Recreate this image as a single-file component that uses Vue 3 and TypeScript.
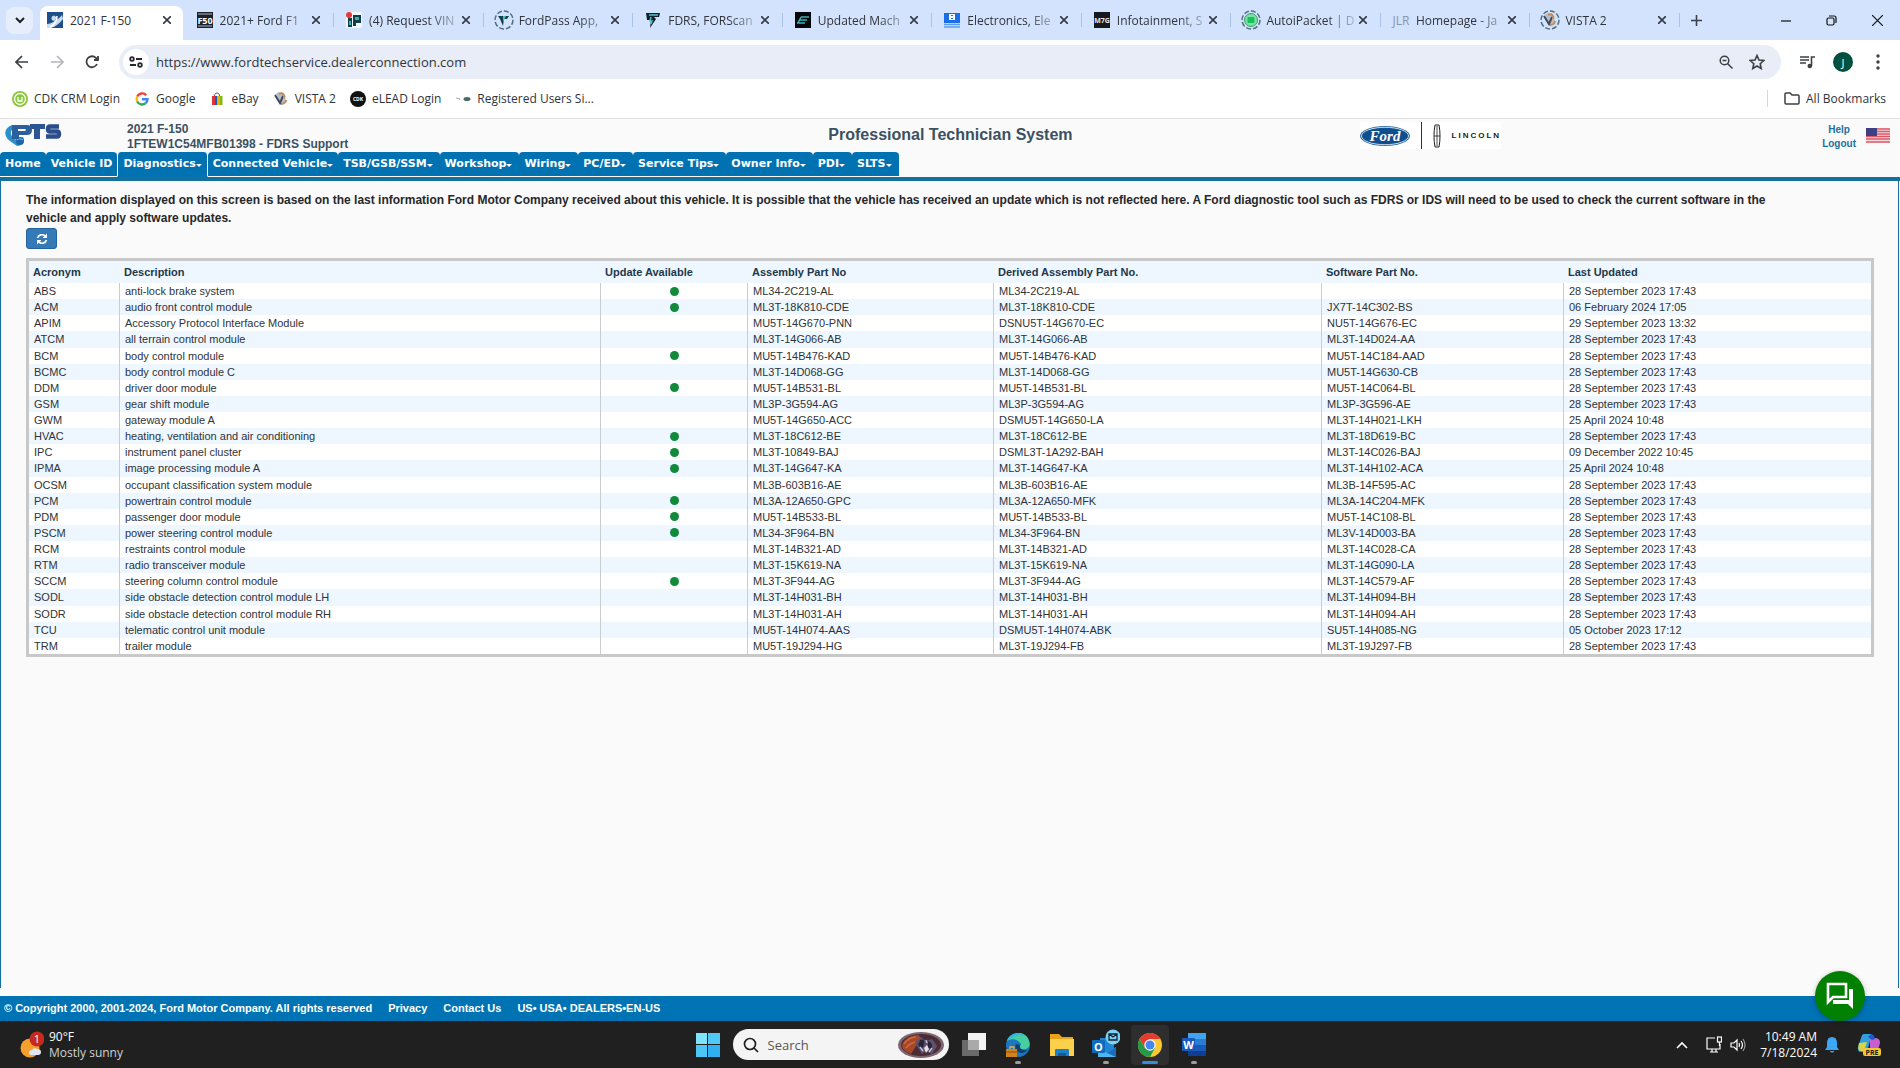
<script setup lang="ts">
interface Tab { title: string; icon: string }
interface Module {
  acronym: string
  description: string
  update: boolean
  assembly: string
  derived: string
  software: string
  updated: string
}

const ring = '<circle cx="10" cy="10" r="9" fill="none" stroke="#4f7180" stroke-width="1.5" stroke-dasharray="5 2"/>'
const vista = '<path d="M5 5c2-3 7-2 9 1l1 6c-1 3-4 4-6 3z" fill="#b9bfc8"/><path d="M4 6l5 8 3-7" fill="none" stroke="#3c4a63" stroke-width="2"/><path d="M8 5c4-2 6 1 5 4M10 15c3 0 5-2 5-4" fill="none" stroke="#c58a55" stroke-width="2"/>'

const tabs: Tab[] = [
  { title: '2021 F-150', icon: '<rect x="2" y="2" width="16" height="16" fill="#1f4f8a"/><path d="M2 14c5 0 10-4 9-7-2-3-6 0-4 3 2 2 7-1 10-5l1 4c-4 5-8 8-12 9H2z" fill="#c9dcee"/><path d="M5 17c4-2 7-6 7-11" fill="none" stroke="#fff" stroke-width="1.5"/>' },
  { title: '2021+ Ford F1', icon: '<rect x="2" y="2" width="16" height="16" fill="#1b2029"/><text x="10" y="13.5" font-size="9" font-weight="700" text-anchor="middle" fill="#fff">F50</text><path d="M3 4h14M3 16h14" stroke="#aeb8c6"/>' },
  { title: '(4) Request VIN', icon: '<rect x="2" y="2" width="16" height="16" rx="2" fill="#f4f8fc"/><path d="M4 8h4v9H4zM9 5h8v8h-5v3H9z" fill="#123c46"/><path d="M11 7h4v3h-4zM5 11h2v4H5z" fill="#35b3b3"/><circle cx="5" cy="5" r="3" fill="#e5383b"/>' },
  { title: 'FordPass App,', icon: ring + '<path d="M4 6h11l-2 3h-3l-1 7-3-7z" fill="#153f49"/><path d="M9 6h3l-3 6z" fill="#42c3c8"/>' },
  { title: 'FDRS, FORScan', icon: '<path d="M3 3h14l-1 4h-5l2 2-6 9 1-8H4z" fill="#10202a"/><path d="M6 5h9M8 7l-1 4h2l-1 3" fill="none" stroke="#4fc3cf" stroke-width="1.5"/>' },
  { title: 'Updated Mach', icon: '<rect x="2" y="2" width="16" height="16" fill="#05080a"/><path d="M8 7h8M6 10h8M4 13h8M8 7l-3 6" stroke="#3bb0b8" stroke-width="1.6"/>' },
  { title: 'Electronics, Ele', icon: '<path d="M2 3h16v10H2z" fill="#1a6fe8"/><path d="M7 4h6v6H7z" fill="#fff"/><path d="M9 5h2v1H9zM9 8h2v1H9z" fill="#1a6fe8"/><path d="M2 14.5h16M2 17h16" stroke="#5e9de8" stroke-width="1.5"/>' },
  { title: 'Infotainment, S', icon: '<rect x="2" y="2" width="16" height="16" fill="#16181f"/><text x="10" y="13" font-size="7" font-weight="700" text-anchor="middle" fill="#e7e9f0">M7G</text>' },
  { title: 'AutoiPacket | D', icon: ring + '<circle cx="10" cy="10" r="6.5" fill="#7ee0a4" stroke="#3c9a68"/><rect x="6.5" y="7" width="7" height="6" rx="1" fill="#12c45a"/>' },
  { title: 'Homepage - Ja', icon: '<text x="10" y="15" font-size="12" text-anchor="middle" fill="#8795aa">JLR</text>' },
  { title: 'VISTA 2', icon: ring + vista },
]

const bookmarks: Tab[] = [
  { title: 'CDK CRM Login', icon: '<circle cx="10" cy="10" r="8" fill="#8cc63f"/><circle cx="10" cy="10" r="5.5" fill="none" stroke="#fff" stroke-width="1.3"/><path d="M8 8v4h4V8" fill="none" stroke="#fff" stroke-width="1.3"/>' },
  { title: 'Google', icon: '<path d="M14.2 6.200a5.500 5.500 0 0 0-9 1.300" fill="none" stroke="#ea4335" stroke-width="2.4"/><path d="M5.200 7.500a5.500 5.500 0 0 0 0 5" fill="none" stroke="#fbbc05" stroke-width="2.4"/><path d="M5.200 12.500a5.500 5.500 0 0 0 8.300 1.800" fill="none" stroke="#34a853" stroke-width="2.4"/><path d="M10 10.200h5.500q0 2.500-2 4.100" fill="none" stroke="#4285f4" stroke-width="2.4"/>' },
  { title: 'eBay', icon: '<path d="M5 7h3v9H5z" fill="#e53238"/><path d="M8 7h2.5v9H8z" fill="#0064d2"/><path d="M10.5 7H13v9h-2.5z" fill="#f5af02"/><path d="M13 7h2.5v9H13z" fill="#86b817"/><path d="M7.5 7c0-4 5-4 5 0" fill="none" stroke="#555"/>' },
  { title: 'VISTA 2', icon: vista },
  { title: 'eLEAD Login', icon: '<circle cx="10" cy="10" r="8" fill="#111"/><text x="10" y="12" font-size="5" font-weight="700" text-anchor="middle" fill="#fff">CDK</text>' },
  { title: 'Registered Users Si...', icon: '<path d="M3 9l4 1-1 1" fill="none" stroke="#aab"/><ellipse cx="14" cy="10" rx="3.5" ry="2" fill="#4a6a62"/>' },
]

const menu = [
  { label: 'Home', drop: false },
  { label: 'Vehicle ID', drop: false },
  { label: 'Diagnostics', drop: true, active: true },
  { label: 'Connected Vehicle', drop: true },
  { label: 'TSB/GSB/SSM', drop: true },
  { label: 'Workshop', drop: true },
  { label: 'Wiring', drop: true },
  { label: 'PC/ED', drop: true },
  { label: 'Service Tips', drop: true },
  { label: 'Owner Info', drop: true },
  { label: 'PDI', drop: true },
  { label: 'SLTS', drop: true },
]

const columns = ['Acronym', 'Description', 'Update Available', 'Assembly Part No', 'Derived Assembly Part No.', 'Software Part No.', 'Last Updated']
const sept = '28 September 2023 17:43'

const m = (acronym: string, description: string, update: boolean, assembly: string, derived: string, software: string, updated = sept): Module =>
  ({ acronym, description, update, assembly, derived, software, updated })

const modules: Module[] = [
  m('ABS', 'anti-lock brake system', true, 'ML34-2C219-AL', 'ML34-2C219-AL', ''),
  m('ACM', 'audio front control module', true, 'ML3T-18K810-CDE', 'ML3T-18K810-CDE', 'JX7T-14C302-BS', '06 February 2024 17:05'),
  m('APIM', 'Accessory Protocol Interface Module', false, 'MU5T-14G670-PNN', 'DSNU5T-14G670-EC', 'NU5T-14G676-EC', '29 September 2023 13:32'),
  m('ATCM', 'all terrain control module', false, 'ML3T-14G066-AB', 'ML3T-14G066-AB', 'ML3T-14D024-AA'),
  m('BCM', 'body control module', true, 'MU5T-14B476-KAD', 'MU5T-14B476-KAD', 'MU5T-14C184-AAD'),
  m('BCMC', 'body control module C', false, 'ML3T-14D068-GG', 'ML3T-14D068-GG', 'MU5T-14G630-CB'),
  m('DDM', 'driver door module', true, 'MU5T-14B531-BL', 'MU5T-14B531-BL', 'MU5T-14C064-BL'),
  m('GSM', 'gear shift module', false, 'ML3P-3G594-AG', 'ML3P-3G594-AG', 'ML3P-3G596-AE'),
  m('GWM', 'gateway module A', false, 'MU5T-14G650-ACC', 'DSMU5T-14G650-LA', 'ML3T-14H021-LKH', '25 April 2024 10:48'),
  m('HVAC', 'heating, ventilation and air conditioning', true, 'ML3T-18C612-BE', 'ML3T-18C612-BE', 'ML3T-18D619-BC'),
  m('IPC', 'instrument panel cluster', true, 'ML3T-10849-BAJ', 'DSML3T-1A292-BAH', 'ML3T-14C026-BAJ', '09 December 2022 10:45'),
  m('IPMA', 'image processing module A', true, 'ML3T-14G647-KA', 'ML3T-14G647-KA', 'ML3T-14H102-ACA', '25 April 2024 10:48'),
  m('OCSM', 'occupant classification system module', false, 'ML3B-603B16-AE', 'ML3B-603B16-AE', 'ML3B-14F595-AC'),
  m('PCM', 'powertrain control module', true, 'ML3A-12A650-GPC', 'ML3A-12A650-MFK', 'ML3A-14C204-MFK'),
  m('PDM', 'passenger door module', true, 'MU5T-14B533-BL', 'MU5T-14B533-BL', 'MU5T-14C108-BL'),
  m('PSCM', 'power steering control module', true, 'ML34-3F964-BN', 'ML34-3F964-BN', 'ML3V-14D003-BA'),
  m('RCM', 'restraints control module', false, 'ML3T-14B321-AD', 'ML3T-14B321-AD', 'ML3T-14C028-CA'),
  m('RTM', 'radio transceiver module', false, 'ML3T-15K619-NA', 'ML3T-15K619-NA', 'ML3T-14G090-LA'),
  m('SCCM', 'steering column control module', true, 'ML3T-3F944-AG', 'ML3T-3F944-AG', 'ML3T-14C579-AF'),
  m('SODL', 'side obstacle detection control module LH', false, 'ML3T-14H031-BH', 'ML3T-14H031-BH', 'ML3T-14H094-BH'),
  m('SODR', 'side obstacle detection control module RH', false, 'ML3T-14H031-AH', 'ML3T-14H031-AH', 'ML3T-14H094-AH'),
  m('TCU', 'telematic control unit module', false, 'MU5T-14H074-AAS', 'DSMU5T-14H074-ABK', 'SU5T-14H085-NG', '05 October 2023 17:12'),
  m('TRM', 'trailer module', false, 'MU5T-19J294-HG', 'ML3T-19J294-FB', 'ML3T-19J297-FB'),
]
</script>

<template>
  <div class="screen">
    <header class="tabstrip">
      <button class="tab-search" aria-label="Search tabs"><svg width="10" height="10" viewBox="0 0 10 10"><path d="M1 3l4 4 4-4" fill="none" stroke="#1f2024" stroke-width="2" /></svg></button>
      <div class="tabs">
        <div v-for="(t, i) in tabs" :key="t.title" class="tab" :class="{ current: i === 0 }">
          <svg class="fav" viewBox="0 0 20 20" v-html="t.icon" />
          <span class="tab-title">{{ t.title }}</span>
          <button class="close" aria-label="Close tab"><svg width="8" height="8" viewBox="0 0 8 8"><path d="M0 0l8 8M8 0L0 8" stroke="#333a44" stroke-width="1.6" /></svg></button>
        </div>
      </div>
      <div class="window-controls">
        <button class="new-tab" aria-label="New tab"><svg width="11" height="11" viewBox="0 0 11 11"><path d="M5.5 0v11M0 5.5h11" stroke="#3a414d" stroke-width="1.6" /></svg></button>
        <button aria-label="Minimize"><svg width="11" height="11" viewBox="0 0 11 11"><path d="M0 6h10" stroke="#111" stroke-width="1.2" /></svg></button>
        <button aria-label="Restore"><svg width="11" height="11" viewBox="0 0 11 11" fill="none" stroke="#111" stroke-width="1.2"><rect x="1" y="3" width="7" height="7" rx="1.5" /><path d="M3 1h5q2 0 2 2v5" /></svg></button>
        <button aria-label="Close"><svg width="11" height="11" viewBox="0 0 11 11"><path d="M0 0l11 11M11 0L0 11" stroke="#111" stroke-width="1.2" /></svg></button>
      </div>
    </header>

    <div class="toolbar">
      <button aria-label="Back"><svg width="14" height="14" viewBox="0 0 14 14" fill="none" stroke="#3c4043" stroke-width="1.7"><path d="M7 1L1 7l6 6M1 7h12" /></svg></button>
      <button aria-label="Forward"><svg width="14" height="14" viewBox="0 0 14 14" fill="none" stroke="#b3b6ba" stroke-width="1.7"><path d="M7 1l6 6-6 6M13 7H1" /></svg></button>
      <button aria-label="Reload"><svg width="14" height="14" viewBox="0 0 14 14" fill="none" stroke="#3c4043" stroke-width="1.8"><path d="M12 9a5.500 5.500 0 1 1-1-6l2 2M13 1v4H9" /></svg></button>
      <div class="omnibox">
        <span class="site"><svg width="14" height="12" viewBox="0 0 14 12" fill="none" stroke="#27292d" stroke-width="1.8"><circle cx="3" cy="3" r="1.8" /><path d="M7 3h6M1 9h6" /><circle cx="11" cy="9" r="1.8" /></svg></span>
        <input aria-label="Address" value="https://www.fordtechservice.dealerconnection.com" />
        <svg width="14" height="14" viewBox="0 0 14 14" fill="none" stroke="#3c4043" stroke-width="1.5"><circle cx="5.5" cy="5.5" r="4.3" /><path d="M3.500 5.500h4M8.500 8.500l5 5" /></svg>
        <svg width="16" height="16" viewBox="0 0 16 16" fill="none" stroke="#3c4043" stroke-width="1.6"><path d="M8 1.500l2 4.500 4.800.5-3.600 3.200 1 4.800L8 12l-4.200 2.500 1-4.800L1.200 6.500 6 6z" /></svg>
      </div>
      <svg class="playlist" width="16" height="14" viewBox="0 0 16 14"><path d="M1 2h9M1 5h9M1 8h6" stroke="#3c4043" stroke-width="1.6" /><path d="M12.500 11V2H16" fill="none" stroke="#3c4043" stroke-width="1.6" /><circle cx="10.8" cy="11" r="2.3" fill="#3c4043" /></svg>
      <span class="avatar">J</span>
      <svg width="4" height="16" viewBox="0 0 4 16" fill="#3c4043"><circle cx="2" cy="2" r="1.7" /><circle cx="2" cy="8" r="1.7" /><circle cx="2" cy="14" r="1.7" /></svg>
    </div>

    <nav class="bookmarks" aria-label="Bookmarks">
      <a v-for="b in bookmarks" :key="b.title" href="#"><svg width="20" height="20" viewBox="0 0 20 20" v-html="b.icon" />{{ b.title }}</a>
      <a href="#" class="all"><svg width="16" height="13" viewBox="0 0 16 13"><path d="M1 2q0-1 1-1h4l2 2h6q1 0 1 1v7q0 1-1 1H2q-1 0-1-1z" fill="none" stroke="#3c4043" stroke-width="1.5" /></svg>All Bookmarks</a>
    </nav>

    <div class="site-head">
      <svg class="pts" width="58" height="24" viewBox="0 0 58 24">
        <path d="M8 2C0 5-1 13 6 18l7 5c6 0 8-5 6-9l-6 3C6 14 5 8 10 5z" fill="#2a8fc9" />
        <circle cx="16" cy="18" r="4" fill="#1c66a8" /><path d="M13 17c2-2 4-1 6 0" stroke="#7cd0ee" fill="none" />
        <path d="M8 2h15q5 0 5 5t-5 5h-8v4H8zm6 4v2h7q2-1 0-2z" fill="#2c5f9e" fill-rule="evenodd" />
        <path d="M26 1h15v5h-5v10h-6V6h-4z" fill="#2b5593" />
        <path d="M55 3.500H46q-2 0-2 2.500t2 2.500h7q2 0 2 2.500t-2 2.500H42" fill="none" stroke="#2b4d8c" stroke-width="4.500" />
      </svg>
      <div class="vehicle"><div>2021 F-150</div><div>1FTEW1C54MFB01398 - FDRS Support</div></div>
      <h1>Professional Technician System</h1>
      <div class="brands">
        <svg width="50" height="20" viewBox="0 0 50 20">
          <ellipse cx="25" cy="10" rx="25" ry="10" fill="#27679f" /><ellipse cx="25" cy="10" rx="23.5" ry="8.7" fill="#0f4f8f" stroke="#c8dbea" />
          <text x="25" y="15" text-anchor="middle" font-family="Liberation Serif, serif" font-style="italic" font-weight="700" font-size="15" fill="#fff">Ford</text>
        </svg>
        <span class="rule"></span>
        <svg width="8" height="24" viewBox="0 0 8 24" fill="none" stroke="#222"><path d="M2 1h4q1 5 1 11T6 23H2Q1 18 1 12T2 1z" /><path d="M4 2v20M1 12h6" stroke-width=".8" /></svg>
        <span class="lincoln">LINCOLN</span>
      </div>
      <div class="account"><a href="#">Help</a><a href="#">Logout</a></div>
      <svg class="flag" width="24" height="15" viewBox="0 0 24 15"><rect width="24" height="15" fill="#f4dadd" /><path d="M0 1h24M0 3.500h24M0 6h24M0 8.500h24M0 11h24M0 14h24" stroke="#dc5a68" stroke-width="1.4" /><rect width="11" height="8" fill="#3f3f86" /></svg>
    </div>

    <nav class="menu" aria-label="Main">
      <a v-for="i in menu" :key="i.label" href="#" :class="{ active: i.active }">{{ i.label }}<span v-if="i.drop" class="caret"></span></a>
    </nav>

    <main class="content">
      <p>The information displayed on this screen is based on the last information Ford Motor Company received about this vehicle. It is possible that the vehicle has received an update which is not reflected here. A Ford diagnostic tool such as FDRS or IDS will need to be used to check the current software in the<br />vehicle and apply software updates.</p>
      <button class="refresh" aria-label="Refresh"><svg width="12" height="12" viewBox="0 0 12 12"><path d="M1.500 5a4.600 4.600 0 0 1 7.500-2M10.500 7A4.600 4.600 0 0 1 3 9" fill="none" stroke="#fff" stroke-width="1.7" /><path d="M11 .5v4.500H6.500zM1 11.500V7h4.500z" fill="#fff" /></svg></button>
      <table>
        <colgroup><col class="c1" /><col class="c2" /><col class="c3" /><col class="c4" /><col class="c5" /><col class="c6" /><col /></colgroup>
        <thead><tr><th v-for="c in columns" :key="c" scope="col">{{ c }}</th></tr></thead>
        <tbody>
          <tr v-for="r in modules" :key="r.acronym">
            <td>{{ r.acronym }}</td><td>{{ r.description }}</td>
            <td class="status"><span v-if="r.update" class="dot"></span></td>
            <td>{{ r.assembly }}</td><td>{{ r.derived }}</td><td>{{ r.software }}</td><td>{{ r.updated }}</td>
          </tr>
        </tbody>
      </table>
    </main>

    <footer class="foot">
      <span>© Copyright 2000, 2001-2024, Ford Motor Company. All rights reserved</span>
      <a href="#">Privacy</a><a href="#">Contact Us</a><span>US• USA• DEALERS•EN-US</span>
      <button class="chat" aria-label="Chat"><svg width="28" height="28" viewBox="0 0 28 28"><path d="M2 2h18v13H7l-5 5z" fill="none" stroke="#fff" stroke-width="2.6" /><path d="M23 7h4v20l-5-5H7v-4h16z" fill="#fff" /></svg></button>
    </footer>

    <div class="taskbar">
      <div class="weather">
        <svg width="24" height="28" viewBox="0 0 24 28"><circle cx="10" cy="17" r="9.5" fill="#f5a02c" /><path d="M11 24q-3-1-2-3 1-2 3-2 2-3 5-1 4 0 4 3t-3 3z" fill="#dfe6f5" /><circle cx="17" cy="8" r="7.5" fill="#c42b1c" /><text x="17" y="12" text-anchor="middle" font-size="11" fill="#fff">1</text></svg>
        <div><div>90°F</div><div class="dim">Mostly sunny</div></div>
      </div>
      <div class="apps">
        <button aria-label="Start"><svg width="24" height="24" viewBox="0 0 24 24"><path d="M0 0h11v11H0z" fill="#7fe3fb" /><path d="M12 0h12v11H12z" fill="#4fc9f6" /><path d="M0 12h11v12H0z" fill="#4cc6f6" /><path d="M12 12h12v12H12z" fill="#2fb0f0" /></svg></button>
        <label class="search">
          <svg width="16" height="16" viewBox="0 0 16 16" fill="none" stroke="#1d1d1d" stroke-width="1.7"><circle cx="7" cy="7" r="5.5" /><path d="M11 11l4 4" /></svg>
          <input type="text" placeholder="Search" aria-label="Search" />
          <svg width="46" height="26" viewBox="0 0 46 26"><ellipse cx="23" cy="13" rx="23" ry="13" fill="#7d6670" /><ellipse cx="23" cy="13" rx="20" ry="11" fill="#4a2b36" /><path d="M4 13Q8 3 20 3l6 5-8 6-5 8Q4 19 4 13z" fill="#a5482a" /><path d="M17 11l6-6 5 4 6-2 5 7-5 8-6-3-4 3z" fill="#5b5470" /><path d="M22 8q5-2 4 4t-4 3-1-4zM30 9q4 1 4 5t-4 2z" fill="#2a2436" /><path d="M26 16l3-3 2 4-3 4z" fill="#e3e0ea" /><path d="M22 15l3 4M34 16l-3 4M28 8l1 3" stroke="#c9c6d8" stroke-width="1.3" /><path d="M6 12q5-7 12-7M8 16q4-5 9-6" stroke="#d06b36" stroke-width="1.5" fill="none" /></svg>
        </label>
        <button aria-label="Task view"><svg width="24" height="24" viewBox="0 0 24 24"><path d="M6 0h18v17H6z" fill="#f3f3f3" /><path d="M0 7h17v16H0z" fill="#6a6a6a" /><path d="M6 7h11v10H6z" fill="#a9a9a9" /></svg></button>
        <button class="open" aria-label="Edge"><svg width="24" height="24" viewBox="0 0 24 24"><circle cx="12" cy="12" r="12" fill="#1b78bf" /><path d="M1 8C5-2 20-3 23 8c2 6-2 9-8 8-3-1-2-3 0-4 0-4-8-8-14-4z" fill="#48cfa0" /><path d="M1 8C4-1 15-2 19 3c-5-2-13 1-18 5z" fill="#31b9dc" /><path d="M10 11c-2 4 0 8 5 9 3 0 5-1 7-3-3 1-9 0-8-5z" fill="#123f73" /><path d="M0 16h11v8H0z" fill="#d4821c" /><path d="M4 16v-2h4v2" fill="none" stroke="#efae3d" stroke-width="1.3" /><path d="M0 19h11" stroke="#8b4e10" /></svg></button>
        <button aria-label="File Explorer"><svg width="24" height="24" viewBox="0 0 24 24"><path d="M0 1h9l3 3h11v6H0z" fill="#e9a21a" /><path d="M0 6h24v17H0z" fill="#fcd04b" /><path d="M5 23v-6q0-1 1-1h12q1 0 1 1v6z" fill="#1f7fc4" /><path d="M8 20h8v3H8z" fill="#125c9c" /></svg></button>
        <button class="open" aria-label="Outlook"><svg width="28" height="32" viewBox="0 0 28 32"><path d="M8 9h14v19H8z" fill="#1f86d6" /><path d="M6 18l9 6 9-6v10H6z" fill="#4bb7f0" /><path d="M15 24l9-6v10z" fill="#1a6dbd" /><rect x="0" y="11" width="13" height="13" rx="1" fill="#0f6cbd" /><text x="6.5" y="21.5" text-anchor="middle" font-size="11" font-weight="700" fill="#fff">O</text><circle cx="21" cy="8" r="7.5" fill="#7cd1f5" /><path d="M17 5h8v6h-8zl4 3 4-3" fill="none" stroke="#123" stroke-width="1.3" /></svg></button>
        <button class="open focus" aria-label="Chrome"><svg width="24" height="24" viewBox="0 0 24 24"><circle cx="12" cy="12" r="12" fill="#fcc934" /><path d="M1.600 6A12 12 0 0 1 22.400 6H12l-5 9z" fill="#e33b2e" /><path d="M1.600 6A12 12 0 0 0 12 24l5-9-10 0z" fill="#269a4b" /><circle cx="12" cy="12" r="5.7" fill="#fff" /><circle cx="12" cy="12" r="4.5" fill="#4285f4" /></svg></button>
        <button class="open" aria-label="Word"><svg width="24" height="24" viewBox="0 0 24 24"><path d="M6 0h18v6H6z" fill="#41a5ee" /><path d="M6 6h18v6H6z" fill="#2b7cd3" /><path d="M6 12h18v6H6z" fill="#185abd" /><path d="M6 18h18v5H6z" fill="#103f91" /><rect y="5" width="13" height="13" rx="1" fill="#185abd" /><text x="6.5" y="16" text-anchor="middle" font-size="11" font-weight="700" fill="#fff">W</text></svg></button>
      </div>
      <div class="tray">
        <svg width="12" height="8" viewBox="0 0 12 8"><path d="M1 7l5-5 5 5" fill="none" stroke="#fff" stroke-width="1.6" /></svg>
        <svg class="net" width="16" height="17" viewBox="0 0 16 17" fill="none" stroke="#fff" stroke-width="1.2"><path d="M9 2H1v11h13V8M4 16h8M6 13v3M10 13v3" /><rect x="11.5" y="1" width="4" height="5" /><path d="M13.500 6v4" /></svg>
        <svg class="vol" width="16" height="14" viewBox="0 0 16 14" fill="none" stroke="#fff" stroke-width="1.2"><path d="M1 5h3l3-3v10L4 9H1zM9 5q1 2 0 4M11 3q3 4 0 8" /><path d="M13 1q4 6 0 12" stroke="#999" /></svg>
        <div class="clock"><div>10:49 AM</div><div>7/18/2024</div></div>
        <svg class="bell" width="14" height="16" viewBox="0 0 14 16" fill="#3ca8f5"><path d="M7 0q5 0 5 6v4l2 3H0l2-3V6q0-6 5-6zM4.500 14h5q-2 3-5 0z" /></svg>
        <svg width="24" height="24" viewBox="0 0 24 24"><path d="M7 1h7l3 7h-4l-3 11H4q-4 0-3-5l3-9q1-4 3-4z" fill="#2f9fe0" /><path d="M2 10l8-1-3 9H4q-4 0-2-8z" fill="#d8d448" /><path d="M13 6l5-1q5 0 5 5l-2 7h-8z" fill="#c85fd0" /><path d="M14 1q3 0 4 5l-3 1-4-3z" fill="#2456c9" /><rect x="6" y="15" width="18" height="8" rx="2" fill="#f7c52f" /><text x="15" y="22" text-anchor="middle" font-size="7" font-weight="700" fill="#222">PRE</text></svg>
      </div>
    </div>
  </div>
</template>

<style>
body { margin: 0; }
</style>

<style scoped>
* { box-sizing: border-box; }
.screen { min-height: 100vh; display: flex; flex-direction: column; background: #fafafa; font-family: "Open Sans", "Noto Sans", sans-serif; font-size: 12px; color: #30343b; }
button { border: 0; background: none; padding: 0; display: flex; align-items: center; justify-content: center; font: inherit; }
a { text-decoration: none; color: inherit; }
input { border: 0; background: none; outline: 0; font: inherit; padding: 0; min-width: 0; color: inherit; }
svg { flex: none; }

.tabstrip { height: 40px; background: #d3e3fd; display: flex; align-items: center; padding-left: 6px; flex: none; }
.tab-search { width: 27px; height: 27px; border-radius: 8px; background: #e6eefc; margin-right: 3px; }
.tabs { flex: 1; display: flex; height: 40px; padding-top: 6px; min-width: 0; }
.tab { flex: 1 1 0; min-width: 0; height: 28px; display: flex; align-items: center; padding: 0 14px 0 10px; position: relative; }
.tab::after { content: ""; position: absolute; right: 0; top: 7px; width: 1px; height: 14px; background: #a9c2ec; }
.tab.current { background: #fff; height: 34px; border-radius: 8px 8px 0 0; padding: 0 12px 6px 5px; margin: 0 2px 0 4px; }
.tab.current::after { display: none; }
.fav { width: 20px; height: 20px; margin-right: 5px; }
.tab-title { flex: 1; overflow: hidden; white-space: nowrap; margin-right: 2px; mask-image: linear-gradient(to right, #000 60px, #0002 92px); }
.tab.current .tab-title { mask-image: none; }
.close { width: 8px; height: 8px; }
.window-controls { width: 220px; display: flex; align-items: center; height: 28px; }
.window-controls button { width: 46px; }
.window-controls .new-tab { width: 34px; margin-right: 50px; }

.toolbar { height: 44px; background: #fff; display: flex; align-items: center; padding: 0 20px 0 15px; flex: none; }
.toolbar > button { width: 14px; margin-right: 21px; }
.omnibox { flex: 1; height: 34px; border-radius: 17px; background: #e9edf8; display: flex; align-items: center; padding: 0 16px 0 4px; gap: 16px; margin-left: -1px; min-width: 0; }
.site { width: 26px; height: 26px; border-radius: 50%; background: #fff; display: flex; align-items: center; justify-content: center; }
.omnibox input { flex: 1; font-size: 13px; margin-left: -9px; }
.playlist { margin: 0 18px; }
.avatar { width: 20px; height: 20px; border-radius: 50%; background: #00513f; color: #fff; display: flex; align-items: center; justify-content: center; font-size: 11px; margin-right: 23px; }

.bookmarks { height: 35px; background: #fff; display: flex; align-items: center; padding: 0 14px 5px 10px; gap: 12px; border-bottom: 1px solid #e2e2e2; flex: none; }
.bookmarks a { display: flex; align-items: center; gap: 4px; white-space: nowrap; }
.bookmarks .all { margin-left: auto; gap: 6px; padding-left: 16px; border-left: 1px solid #c9d8f5; }

.site-head, .content, .foot { font-family: "Liberation Sans", Arial, sans-serif; }
.site-head { display: flex; align-items: flex-start; height: 33px; color: #3b5162; font-weight: 700; }
.pts { margin: 4px 0 0 4px; }
.vehicle { margin: 3px 0 0 65px; line-height: 15px; flex: 1; }
h1 { margin: 7px 0 0; font-size: 16px; line-height: 18px; }
.brands { margin: 3px 0 0 287px; display: flex; align-items: center; gap: 11px; height: 27px; background: #fff; }
.rule { width: 1px; height: 27px; background: #333; }
.lincoln { font-size: 8px; letter-spacing: 2px; color: #222; }
.account { margin: 4px 0 0 321px; font-size: 10px; line-height: 14px; display: flex; flex-direction: column; align-items: center; color: #1f6f9e; }
.flag { margin: 9px 10px 0; }

.menu { display: flex; height: 29px; border-bottom: 4px solid #14709f; font: 700 11px/24px "DejaVu Sans", Verdana, sans-serif; color: #fff; }
.menu a { height: 25px; background: #0072b1; border-radius: 4px 4px 0 0; border-bottom: 1px solid #fff; padding: 0 5px; white-space: nowrap; display: flex; align-items: center; }
.menu .active { border-left: 1px solid #fff; border-right: 1px solid #fff; border-bottom-color: #0072b1; }
.menu .active ~ .active ~ a, .menu a:nth-child(n + 5) { padding-right: 7px; }
.caret { border: 3px solid transparent; border-top-color: #fff; border-bottom: 0; margin-top: 3px; }

.content { flex: 1; margin: 0 1px 8px 0; border: solid #14709f; border-width: 0 1px; padding: 10px 24px 0 25px; }
p { margin: 0 0 1px; font-weight: 700; font-size: 12px; line-height: 18px; color: #26282b; }
.refresh { width: 31px; height: 21px; background: #337ab7; border: 1px solid #2363a0; border-radius: 3px; margin-bottom: 9px; }
table { width: 100%; height: 399px; table-layout: fixed; border-spacing: 0; border: 3px solid #c8c8c8; background: #fff; font-size: 11px; line-height: 14px; color: #2f3338; }
.c1 { width: 90px; } .c2 { width: 481px; } .c3 { width: 147px; } .c4 { width: 246px; } .c5 { width: 328px; } .c6 { width: 242px; }
th { text-align: left; padding: 4px 5px; color: #22384a; background: #eef7ff; }
th:first-child { padding-left: 4px; }
td { padding: 1px 5px; border-left: 1px solid #c9cdd0; white-space: nowrap; }
td:first-child { border-left: 0; }
tbody tr:nth-child(even) { background: #eef7ff; }
.status { text-align: center; line-height: 0; }
.dot { display: inline-block; width: 9px; height: 9px; border-radius: 50%; background: #128a3c; vertical-align: middle; }

.foot { height: 25px; background: #0073b4; color: #fff; font-weight: 700; font-size: 11px; display: flex; align-items: center; gap: 16px; padding: 0 0 1px 4px; position: relative; flex: none; }
.chat { position: absolute; right: 35px; bottom: 0; width: 50px; height: 50px; border-radius: 50%; background: #008000; box-shadow: 0 1px 5px #0004; }

.taskbar { height: 47px; background: #202020; color: #fff; display: flex; align-items: center; flex: none; line-height: 16px; }
.weather { display: flex; gap: 5px; align-items: center; padding-left: 20px; flex: 1 1 0; }
.dim { color: #d2d2d2; }
.apps { display: flex; align-items: center; height: 46px; padding-left: 6px; }
.apps button { width: 38px; height: 40px; margin-right: 6px; border-radius: 4px; position: relative; }
.apps .open::after { content: ""; position: absolute; bottom: 1px; left: 16px; width: 6px; height: 3px; border-radius: 2px; background: #9c9c9c; }
.apps .focus { background: #2e2e2e; }
.apps .focus::after { left: 11px; width: 16px; background: #2f8fd8; }
.search { width: 216px; height: 31px; border-radius: 16px; background: #f4f4f4; display: flex; align-items: center; padding: 0 5px 0 10px; gap: 9px; margin-right: 6px; color: #555; font-size: 13px; }
.search input { flex: 1; }
.search input::placeholder { color: #555; opacity: 1; }
.tray { flex: 1 1 0; display: flex; align-items: center; justify-content: flex-end; padding-right: 19px; }
.net { margin-left: 18px; }
.vol { margin-left: 8px; }
.clock { text-align: right; margin-left: 14px; }
.bell { margin: 0 18px 0 8px; }
</style>
